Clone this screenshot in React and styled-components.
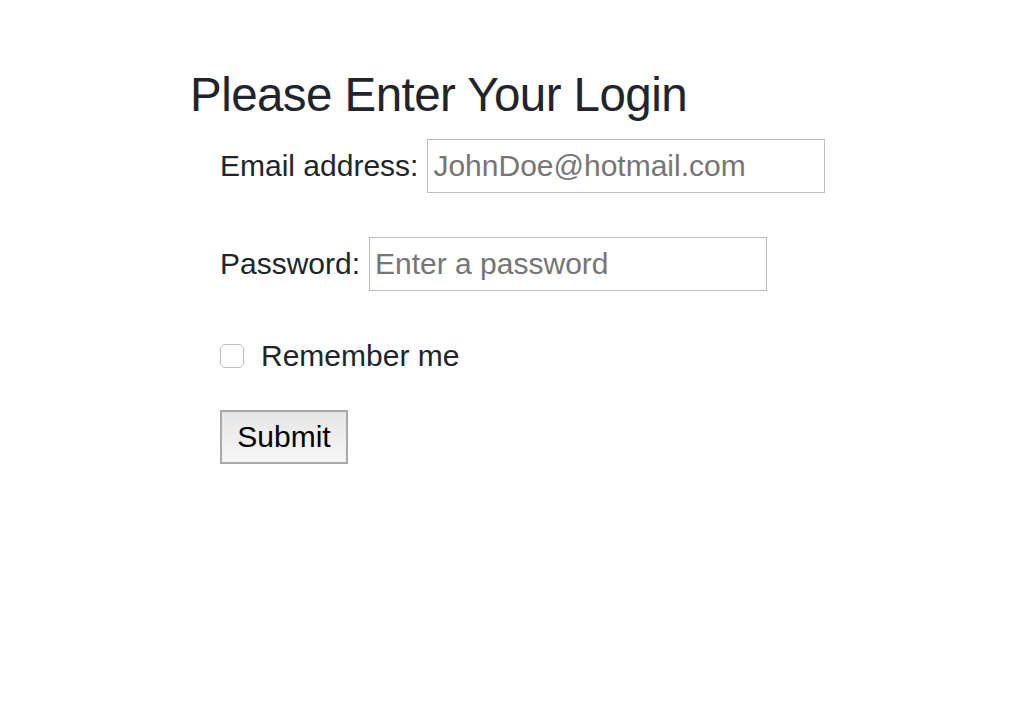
import React from "react";
import styled, { createGlobalStyle } from "styled-components";

const Global = createGlobalStyle`
  html, body { margin: 0; padding: 0; background: #fff; }
  body { font-family: "Liberation Sans", Arial, sans-serif; color: #212529; }
`;

const Page = styled.div`
  padding: 66px 0 0 190px;
`;

const Title = styled.h2`
  margin: 0;
  font-size: 47.5px;
  letter-spacing: -0.55px;
  font-weight: 400;
  line-height: 1.2;
  color: #212529;
`;

const Form = styled.form`
  display: flex;
  flex-direction: column;
  align-items: flex-start;
  padding-left: 30px;
  margin-top: 16px;
`;

const Row = styled.div`
  display: flex;
  align-items: center;
  gap: ${(p) => p.$gap || 9}px;
  margin-bottom: ${(p) => p.$mb || 0}px;
`;

const Label = styled.label`
  font-size: 30px;
  line-height: 1;
  color: #212529;
`;

const Input = styled.input`
  box-sizing: border-box;
  width: 398px;
  height: 54px;
  padding: 0 5px;
  border: 1px solid #bdbdbd;
  border-radius: 0;
  font-family: "Liberation Sans", Arial, sans-serif;
  font-size: 30px;
  color: #212529;
  outline: none;
  &::placeholder { color: #757575; }
`;

const Check = styled.input`
  appearance: none;
  -webkit-appearance: none;
  box-sizing: border-box;
  margin: 0;
  width: 24px;
  height: 24px;
  border: 1px solid #bdbdbd;
  border-radius: 5px;
  background: #fff;
`;

const Button = styled.button`
  box-sizing: border-box;
  width: 128px;
  height: 54px;
  border: 2px solid #a9a9a9;
  border-radius: 0;
  background: linear-gradient(#e6e6e6, #f6f6f6);
  font-family: "Liberation Sans", Arial, sans-serif;
  font-size: 30px;
  color: #000;
  padding: 0;
`;

export default function App() {
  return (
    <>
      <Global />
      <Page>
        <Title>Please Enter Your Login</Title>
        <Form onSubmit={(e) => e.preventDefault()}>
          <Row $mb={44}>
            <Label htmlFor="email">Email address:</Label>
            <Input id="email" type="email" placeholder="JohnDoe@hotmail.com" />
          </Row>
          <Row $mb={50}>
            <Label htmlFor="pw">Password:</Label>
            <Input id="pw" type="password" placeholder="Enter a password" />
          </Row>
          <Row $gap={17} $mb={39}>
            <Check id="rem" type="checkbox" />
            <Label htmlFor="rem">Remember me</Label>
          </Row>
          <Button type="submit">Submit</Button>
        </Form>
      </Page>
    </>
  );
}
